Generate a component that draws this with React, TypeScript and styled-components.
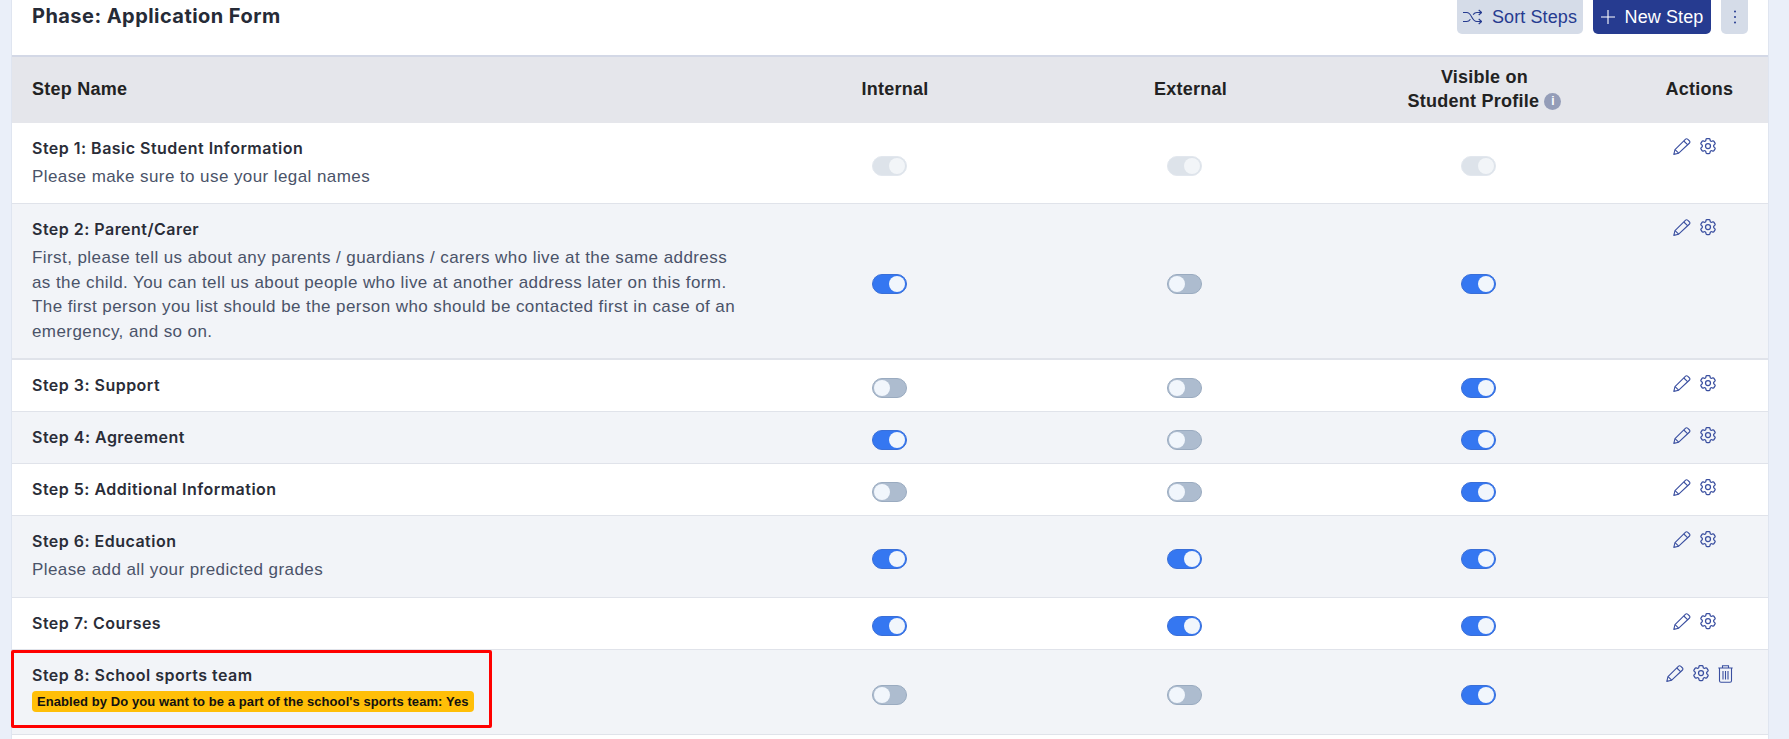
import React from "react";
import styled, { createGlobalStyle } from "styled-components";
import { HiOutlineCog6Tooth } from "react-icons/hi2";

const Global = createGlobalStyle`
  html, body { margin: 0; padding: 0; background: #eaeff9; overflow: hidden; }
  body { font-family: "Liberation Sans", Arial, sans-serif; }
`;

const Page = styled.div`
  height: 739px;
  overflow: hidden;
  padding: 0 20px 0 11px;
  position: relative;
`;
const Panel = styled.section`
  background: #fff;
  border-left: 1px solid #dfe5f0;
  border-right: 1px solid #dfe5f0;
  height: 739px;
`;
const TopBar = styled.header`
  height: 55px;
  display: flex;
  align-items: flex-start;
  justify-content: space-between;
  padding: 0 20px 0 20px;
`;
const Title = styled.h1`
  margin: 1px 0 0;
  font: 700 20px/30px "Inter", sans-serif;
  letter-spacing: 0.45px;
  color: #262b37;
`;
const Tools = styled.div`
  display: flex;
  gap: 10px;
`;
const ToolButton = styled.button<{ $primary?: boolean; $w: number }>`
  width: ${(p) => p.$w}px;
  height: 34px;
  border: 0;
  border-radius: 0 0 5px 5px;
  padding: 0;
  display: flex;
  align-items: center;
  justify-content: center;
  gap: 10px;
  font: 400 18px "Liberation Sans", sans-serif;
  letter-spacing: 0.1px;
  background: ${(p) => (p.$primary ? "#263b90" : "#d5dce8")};
  color: ${(p) => (p.$primary ? "#fff" : "#263b90")};
  svg { display: block; }
`;
const HeadRow = styled.div`
  display: grid;
  grid-template-columns: 735px 296px 295px 293px 1fr;
  align-items: center;
  box-sizing: border-box;
  height: 68px;
  padding-bottom: 3px;
  background: #e5e6eb;
  border-top: 2px solid #d3d8e6;
  font-weight: 700;
  font-size: 18px;
  line-height: 24px;
  color: #222;
  letter-spacing: 0.25px;
`;
const HeadName = styled.div`
  padding-left: 20px;
`;
const HeadCell = styled.div`
  text-align: center;
`;
const Info = styled.span`
  display: inline-flex;
  width: 17px;
  height: 17px;
  margin-left: 5px;
  vertical-align: 2px;
  border-radius: 50%;
  background: #949db8;
  color: #fff;
  font-size: 12px;
  font-weight: 700;
  line-height: 17px;
  letter-spacing: 0;
  align-items: center;
  justify-content: center;
`;
const Row = styled.div<{ $alt?: boolean; $h: number; $thick?: boolean }>`
  display: grid;
  grid-template-columns: 735px 296px 295px 293px 1fr;
  height: ${(p) => p.$h}px;
  box-sizing: border-box;
  background: ${(p) => (p.$alt ? "#f2f4f8" : "#fff")};
  border-bottom: ${(p) => (p.$thick ? 2 : 1)}px solid #e0e3ea;
`;
const NameCell = styled.div`
  padding: 15px 0 0 20px;
`;
const StepTitle = styled.div`
  font: 600 16px/20px "Inter", sans-serif;
  letter-spacing: 0.48px;
  color: #2a2d38;
`;
const StepText = styled.div`
  font-size: 17px;
  line-height: 24.7px;
  color: #4a5369;
  margin-top: 7px;
  letter-spacing: 0.42px;
  width: 708px;
`;
const Enabled = styled.span`
  display: inline-block;
  margin-top: 6px;
  background: #ffbf08;
  color: #111;
  border-radius: 4px;
  padding: 0 5px;
  font-size: 13px;
  font-weight: 700;
  line-height: 21px;
  letter-spacing: 0.08px;
`;
const ToggleCell = styled.div`
  display: flex;
  align-items: center;
  justify-content: center;
  padding: 5px 12px 0 0;
`;
const Toggle = styled.span<{ $on: boolean; $disabled?: boolean }>`
  width: 35px;
  height: 20px;
  box-sizing: border-box;
  border-radius: 10px;
  display: flex;
  justify-content: ${(p) => (p.$on ? "flex-end" : "flex-start")};
  padding: 1px;
  background: ${(p) => (p.$disabled ? "#dde3ea" : p.$on ? "#3577f1" : "#adbccf")};
  border: 1px solid ${(p) => (p.$disabled ? "#e2e7ee" : p.$on ? "#3a6fd8" : "#9aabc0")};
  &::after {
    content: "";
    width: 16px;
    height: 16px;
    border-radius: 50%;
    background: ${(p) => (p.$disabled ? "#f2f5f8" : "#f1f6fc")};
  }
`;
const ActionCell = styled.div<{ $trash?: boolean }>`
  display: flex;
  gap: 7px;
  padding: 15px 0 0 ${(p) => (p.$trash ? 35 : 42)}px;
  color: #3a4fa0;
  align-items: flex-start;
  svg { display: block; flex: none; }
`;
const GearIcon = styled(HiOutlineCog6Tooth)`
  margin-top: -2px;
`;

const Pencil = () => (
  <svg width="18" height="17" viewBox="0 0 18 17" fill="none" stroke="currentColor" strokeWidth="1.1" strokeLinejoin="round">
    <path d="M.8 16.4l1.2-4.700L12.600 1.200a1.400 1.400 0 0 1 2 0l1.900 1.800a1.400 1.400 0 0 1 0 2L5.700 15.200z" />
    <path d="M10.800 3l4 3.800M2 11.700l3.700 3.500" />
  </svg>
);
const Trash = () => (
  <svg width="15" height="18" viewBox="0 0 15 18" fill="none" stroke="currentColor" strokeWidth="1.100">
    <path d="M.3 3h14.400M4.500 2.800V.8h6v2" />
    <path d="M1.500 3v12.800a1.500 1.500 0 0 0 1.500 1.500h9a1.500 1.500 0 0 0 1.500-1.500V3" />
    <path d="M5 6v8.500M7.500 6v8.500M10 6v8.500" />
  </svg>
);
const Shuffle = () => (
  <svg width="19" height="16" viewBox="0 0 19 16" fill="none" stroke="currentColor" strokeWidth="1.100">
    <path d="M0 3.500h3.700c2.500 0 3.600 1.700 5 4.500 1.400 2.800 2.600 4.500 5.200 4.500h4.600" />
    <path d="M0 12.500h3.700c1.700 0 2.800-.9 3.700-2.300M10.100 5.600c1-1.300 2.100-2.100 3.800-2.100h4.600" />
    <path d="M15.700 1l2.900 2.500-2.900 2.500M15.700 10l2.900 2.500-2.900 2.500" />
  </svg>
);
const Plus = () => (
  <svg width="14" height="14" viewBox="0 0 14 14" stroke="currentColor" strokeWidth="1.100">
    <path d="M7 0v14M0 7h14" />
  </svg>
);
const Dots = () => (
  <svg width="4" height="14" viewBox="0 0 4 14" fill="currentColor">
    <circle cx="2" cy="1.500" r="1" /><circle cx="2" cy="7" r="1" /><circle cx="2" cy="12.500" r="1" />
  </svg>
);

type Step = {
  h: number;
  title: string;
  text?: string;
  enabled?: string;
  flags: [boolean, boolean, boolean];
  disabled?: boolean;
  trash?: boolean;
  thick?: boolean;
};
const steps: Step[] = [
  { h: 81, title: "Step 1: Basic Student Information", text: "Please make sure to use your legal names", flags: [true, true, true], disabled: true },
  { h: 156, thick: true, title: "Step 2: Parent/Carer", text: "First, please tell us about any parents / guardians / carers who live at the same address as the child. You can tell us about people who live at another address later on this form. The first person you list should be the person who should be contacted first in case of an emergency, and so on.", flags: [true, false, true] },
  { h: 52, title: "Step 3: Support", flags: [false, false, true] },
  { h: 52, title: "Step 4: Agreement", flags: [true, false, true] },
  { h: 52, title: "Step 5: Additional Information", flags: [false, false, true] },
  { h: 82, title: "Step 6: Education", text: "Please add all your predicted grades", flags: [true, true, true] },
  { h: 52, title: "Step 7: Courses", flags: [true, true, true] },
  { h: 85, title: "Step 8: School sports team", enabled: "Enabled by Do you want to be a part of the school's sports team: Yes", flags: [false, false, true], trash: true },
];

const Highlight = styled.div`
  position: absolute;
  left: 11px;
  top: 650px;
  width: 481px;
  height: 78px;
  box-sizing: border-box;
  border: 3px solid #f00;
  border-radius: 2px;
  pointer-events: none;
`;

export default function App() {
  return (
    <Page>
      <Global />
      <Panel>
        <TopBar>
          <Title>Phase: Application Form</Title>
          <Tools>
            <ToolButton $w={126}><Shuffle />Sort Steps</ToolButton>
            <ToolButton $primary $w={118}><Plus />New Step</ToolButton>
            <ToolButton $w={27}><Dots /></ToolButton>
          </Tools>
        </TopBar>
        <HeadRow>
          <HeadName>Step Name</HeadName>
          <HeadCell>Internal</HeadCell>
          <HeadCell>External</HeadCell>
          <HeadCell>Visible on<br />Student Profile<Info>i</Info></HeadCell>
          <HeadCell>Actions</HeadCell>
        </HeadRow>
        {steps.map((s, i) => (
          <Row key={s.title} $alt={i % 2 === 1} $h={s.h} $thick={s.thick}>
            <NameCell>
              <StepTitle>{s.title}</StepTitle>
              {s.text && <StepText>{s.text}</StepText>}
              {s.enabled && <Enabled>{s.enabled}</Enabled>}
            </NameCell>
            {s.flags.map((f, j) => (
              <ToggleCell key={j}><Toggle $on={f} $disabled={s.disabled} /></ToggleCell>
            ))}
            <ActionCell $trash={s.trash}>
              <Pencil /><GearIcon size={20} />{s.trash && <Trash />}
            </ActionCell>
          </Row>
        ))}
      </Panel>
      <Highlight />
    </Page>
  );
}
